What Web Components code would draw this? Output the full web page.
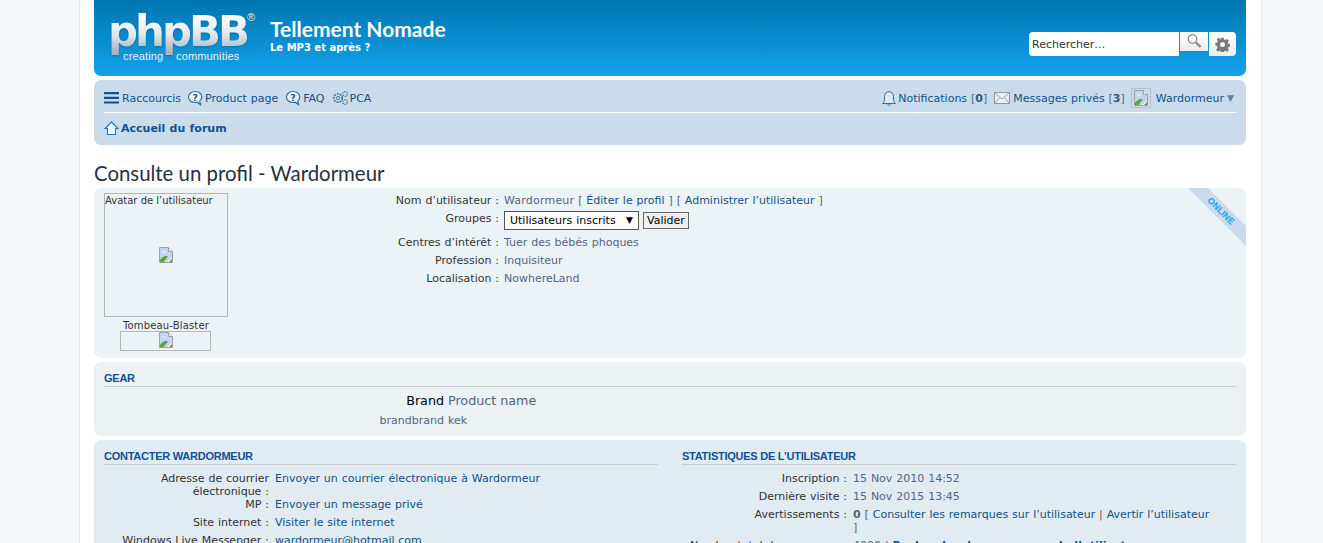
<!DOCTYPE html>
<html lang="fr"><head><meta charset="utf-8"><title>Consulte un profil</title>
<style>
html,body{margin:0;height:543px;overflow:hidden;background:#f5f7fa}
body{font-family:"DejaVu Sans",Verdana,sans-serif;font-size:11px;color:#536482}
</style></head><body>
<phpbb-page>
  <site-header></site-header>
  <nav-bar></nav-bar>
  <page-title>Consulte un profil - Wardormeur</page-title>
  <profile-panel>
    <field-row label="Nom d’utilisateur :" style="--dt:395px"><span style="letter-spacing:.2px">Wardormeur</span> [ <a>Éditer le profil</a> ] [ <a>Administrer l’utilisateur</a> ]</field-row>
    <field-row label="Groupes :" style="--dt:395px;--h:19px"><group-select></group-select></field-row>
    <field-row label="Centres d’intérêt :" style="--dt:395px">Tuer des bébés phoques</field-row>
    <field-row label="Profession :" style="--dt:395px">Inquisiteur</field-row>
    <field-row label="Localisation :" style="--dt:395px">NowhereLand</field-row>
  </profile-panel>
  <gear-panel></gear-panel>
  <two-col-panel>
    <section-block slot="left" title="CONTACTER WARDORMEUR">
      <field-row label="Adresse de courrier électronique :" style="--dt:165px;--gap:6px;--pb:0"><a>Envoyer un courrier électronique à Wardormeur</a></field-row>
      <field-row label="MP :" style="--dt:165px;--gap:6px"><a>Envoyer un message privé</a></field-row>
      <field-row label="Site internet :" style="--dt:165px;--gap:6px"><a>Visiter le site internet</a></field-row>
      <field-row label="Windows Live Messenger :" style="--dt:165px;--gap:6px"><a>wardormeur@hotmail.com</a></field-row>
    </section-block>
    <section-block slot="right" title="STATISTIQUES DE L’UTILISATEUR">
      <field-row label="Inscription :" style="--dt:165px;--gap:6px">15 Nov 2010 14:52</field-row>
      <field-row label="Dernière visite :" style="--dt:165px;--gap:6px">15 Nov 2015 13:45</field-row>
      <field-row label="Avertissements :" style="--dt:165px;--gap:6px;--dd:358px"><b>0</b> [ <a>Consulter les remarques sur l’utilisateur</a> | <a>Avertir l’utilisateur</a> ]</field-row>
      <field-row label="Nombre total de messages :" style="--dt:165px;--gap:6px;--dd:358px">4000 | <a><b>Rechercher les messages de l’utilisateur</b></a></field-row>
    </section-block>
  </two-col-panel>
</phpbb-page>
<script>
const BROKEN=`<svg width="16" height="16" viewBox="0 0 16 16" style="display:block"><path d="M1.5.5H10.5L14.5 4.5V15.5H1.5Z" fill="#fff" stroke="#a0a0a0"/><path d="M10.5.5V4.5H14.5" fill="#eee" stroke="#a0a0a0"/><path d="M2 1H10V5H14V11L9 15H2Z" fill="#c3d5f5"/><path d="M4 5.5c0-1.3 3-1.3 4 0z" fill="#fff"/><path d="M2 15V13C4 10 7 8 10 9.5L5.5 15Z" fill="#5ba532"/><path d="M11 15l3-3v3z" fill="#5ba532"/></svg>`;
function def(name,html,init){customElements.define(name,class extends HTMLElement{constructor(){super();this.attachShadow({mode:"open"}).innerHTML=html}connectedCallback(){init&&init(this)}})}

def("phpbb-page",`<style>
:host{display:block;box-sizing:border-box;width:1183px;margin-left:79px;padding:0 15px 0 14px;background:#fff;border:solid #e6e9ed;border-width:0 1px;height:543px;overflow:hidden}
</style><slot></slot>`);

def("site-header",`<style>
:host{display:flex;height:76px;box-sizing:border-box;padding-left:16px;background:linear-gradient(#0076b1,#12a3eb);border-radius:0 0 7px 7px;color:#fff;align-items:flex-start}
.logo{position:relative;width:160px;height:76px;flex:none}
.pb{position:absolute;left:-2px;top:4px;font:700 42px/56px "DejaVu Sans",sans-serif;letter-spacing:-3px;background:linear-gradient(#fff 22%,#e3e7ea 55%,#aab5bd 85%);-webkit-background-clip:text;background-clip:text;color:transparent;filter:drop-shadow(0 1px 1px rgba(0,60,110,.35))}
.reg{position:absolute;left:137px;top:11px;font:11px/13px "Liberation Sans",sans-serif;color:#dfe9ef}
.t1,.t2{position:absolute;top:49px;font:11px/14px "Liberation Sans",sans-serif;letter-spacing:.15px;color:#e8eff3}
.t1{left:13px}.t2{left:66px}
.site{padding-top:16px;flex:1}
h1{margin:0;font:700 21px/26px "Lato",sans-serif}
p{margin:0;font:700 10px/12px "DejaVu Sans",sans-serif}
.search{display:flex;align-items:flex-start;margin:32px 10px 0 0}
.in{width:150px;height:24px;box-sizing:border-box;background:#fff;border-radius:4px 0 0 4px;color:#333;font:11px/26px "DejaVu Sans",sans-serif;padding-left:3px}
.b{background:linear-gradient(#fff,#ececec);display:flex;justify-content:center}
.b1{width:28px;height:19px;margin-left:1px}
.b2{width:27px;height:24px;margin-left:1px;border-radius:0 4px 4px 0;align-items:center}
</style>
<div class="logo"><span class="pb">phpBB</span><span class="reg">®</span><span class="t1">creating</span><span class="t2">communities</span></div>
<div class="site"><h1>Tellement Nomade</h1><p>Le MP3 et après ?</p></div>
<div class="search"><div class="in">Rechercher…</div>
<div class="b b1"><svg width="16" height="17" viewBox="0 0 16 17"><circle cx="6.500" cy="7" r="4.300" fill="#fafafa" stroke="#777" stroke-width="1.100"/><path d="M10 10.500l4.500 4.500" stroke="#8a8a8a" stroke-width="2.400"/></svg></div>
<div class="b b2"><svg width="15" height="15" viewBox="0 0 24 24"><path fill="#7b7b7b" fill-rule="evenodd" d="M10 1h4l.6 3 2.2.9 2.6-1.7 2.8 2.8-1.7 2.6.9 2.2 3 .6v4l-3 .6-.9 2.2 1.7 2.6-2.8 2.8-2.6-1.7-2.2.9-.6 3h-4l-.6-3-2.2-.9-2.6 1.700-2.8-2.8 1.7-2.6L3.600 14l-3-.6v-4l3-.6.9-2.2L2.800 4l2.800-2.800 2.600 1.700L9.400 4zM12 8a4 4 0 1 0 0 8 4 4 0 0 0 0-8z"/></svg></div></div>`);

const Q=`<svg width="17" height="16" viewBox="0 0 17 16"><path d="M8 1.500C4.300 1.500 1.500 3.800 1.500 7S4.300 12.500 8 12.500c.8 0 1.500-.1 2.200-.3l3.300 2.300-.8-3.400C14 10 14.800 8.600 14.800 7 14.800 3.800 11.800 1.500 8 1.500Z" fill="#eef5fa" stroke="#2f6d9c" stroke-width="1.200"/><text x="8" y="10.500" text-anchor="middle" font-family="DejaVu Sans" font-weight="700" font-size="9" fill="#105289">?</text></svg>`;
def("nav-bar",`<style>
:host{display:block;margin-top:4px;height:65px;box-sizing:border-box;padding:0 10px;background:#cadceb;border-radius:7px;color:#105289;font:11px/13px "DejaVu Sans",sans-serif;word-spacing:.4px}
.r1{display:flex;align-items:center;height:28px;padding-top:4px;border-bottom:1px solid #fff}
.it{display:flex;align-items:center;gap:1px;margin-right:7px;white-space:nowrap}
.sp{flex:1}
.r2{display:flex;align-items:center;height:30px;font-weight:700;gap:2px}
svg{display:block;flex:none}
.av{box-sizing:border-box;width:20px;height:20px;border:1px solid #b9c2ca;display:flex;align-items:center;justify-content:center;margin-right:5px}
.tri{font-size:9px;color:#5a86ab;margin:0 2px 0 3px}
b{color:#2a5a85}
.gr{color:#536482}
</style>
<div class="r1">
<span class="it" style="gap:3px;margin-right:6px"><svg width="15" height="12" viewBox="0 0 15 12"><path d="M0 0h15v2.200H0zM0 4.700h15v2.200H0zM0 9.400h15v2.200H0z" fill="#105289"/></svg>Raccourcis</span>
<span class="it">${Q}Product page</span>
<span class="it">${Q}FAQ</span>
<span class="it"><svg width="17" height="16" viewBox="0 0 17 16" fill="none" stroke="#4d7ea6"><circle cx="6" cy="8" r="4.200" stroke-width="1.800" stroke-dasharray="2 1"/><circle cx="6" cy="8" r="1.600"/><circle cx="13" cy="4" r="2.400" stroke-width="1.300" stroke-dasharray="1.500 .8"/><circle cx="13" cy="12" r="2.400" stroke-width="1.300" stroke-dasharray="1.500 .8"/></svg>PCA</span>
<span class="sp"></span>
<span class="it"><svg width="16" height="16" viewBox="0 0 16 16" fill="#dbe7f1" stroke="#2f6d9c"><path d="M1.500 13.500c1.500-1 2-2.500 2-4.500V6.500C3.500 3.800 5.500 1.700 8 1.700s4.500 2.100 4.500 4.800V9c0 2 .5 3.500 2 4.500Z"/><path d="M6.500 14.500c.5 1 2.500 1 3 0" fill="none"/></svg><span>Notifications <span class="gr">[</span><b>0</b><span class="gr">]</span></span></span>
<span class="it" style="gap:3px;margin-right:6px"><svg width="16" height="12" viewBox="0 0 16 12"><rect x=".5" y=".5" width="15" height="11" fill="#e9eff4" stroke="#8c9aa6"/><path d="M1 1l7 6 7-6M1 11l5-5.500M15 11l-5-5.500" fill="none" stroke="#9aa6b0"/></svg><span>Messages privés <span class="gr">[</span><b>3</b><span class="gr">]</span></span></span>
<span class="av">${BROKEN}</span>
<span>Wardormeur</span><span class="tri">▼</span>
</div>
<div class="r2"><svg width="15" height="15" viewBox="0 0 15 15"><path d="M7.500 1L14 7.500H11.500V13.500H3.500V7.500H1Z" fill="#f4f9fc" stroke="#1b78b4" stroke-width="1.100"/></svg>Accueil du forum</div>`);

def("page-title",`<style>
:host{display:block;margin-top:16px;font:20.4px/24px "Lato",sans-serif;color:#28313f;height:27px}
</style><slot></slot>`);

def("profile-panel",`<style>
:host{display:flex;position:relative;height:170px;box-sizing:border-box;padding:5px 10px;background:#ecf3f7;border-radius:7px;overflow:hidden;color:#536482}
.l{width:124px;flex:none;color:#333;font-size:10px;line-height:12px}
.av{box-sizing:border-box;width:124px;height:124px;border:1px solid #b5b5b5;position:relative;display:flex;align-items:center;justify-content:center}
.av span{position:absolute;left:0;top:1px;font-size:10px;white-space:nowrap}
.n{text-align:center;margin-top:3px;line-height:11px;letter-spacing:.15px}
.rk{box-sizing:border-box;margin:0 0 0 16px;width:91px;height:20px;border:1px solid #b5b5b5;display:flex;justify-content:center}
.d{margin-left:-124px;padding-top:1px;flex:1}
.rib{position:absolute;right:0;top:0;display:block}
.on{position:absolute;right:5px;top:18px;width:40px;text-align:center;transform:rotate(45deg);font:700 9px/10px "Liberation Sans",sans-serif;color:#1da1ee}
</style>
<div class="l"><div class="av"><span>Avatar de l’utilisateur</span>${BROKEN}</div><div class="n">Tombeau-Blaster</div><div class="rk">${BROKEN}</div></div>
<div class="d"><slot></slot></div>
<svg class="rib" width="58" height="58" viewBox="0 0 58 58"><path d="M0 0H20L58 38V58Z" fill="#cadceb"/></svg>
<span class="on">ONLINE</span>`);

def("field-row",`<style>
:host{display:flex;font:11px/13px "DejaVu Sans",sans-serif;word-spacing:.4px;padding-bottom:var(--pb,5px);min-height:var(--h,13px)}
.dt{width:var(--dt,340px);flex:none;text-align:right;color:#333}
.dd{margin-left:var(--gap,5px);max-width:var(--dd,none);flex:1;min-width:0;color:#536482}
::slotted(a){color:#105289}
</style><div class="dt"></div><div class="dd"><slot></slot></div>`,el=>{el.shadowRoot.querySelector(".dt").textContent=el.getAttribute("label")});

def("group-select",`<style>
:host{display:flex;align-items:center;gap:4px;margin-top:-1px;color:#000}
.s{box-sizing:border-box;width:135px;height:19px;border:1px solid #555;background:#fff;display:flex;align-items:center;justify-content:space-between;padding:0 5px;font:11px/15px "DejaVu Sans",sans-serif}
.s i{font-style:normal;font-size:9px}
.v{box-sizing:border-box;width:46px;height:17px;border:1px solid #666;background:#efefef;text-align:center;font:11px/15px "DejaVu Sans",sans-serif}
</style><div class="s">Utilisateurs inscrits<i>▼</i></div><div class="v">Valider</div>`);

def("gear-panel",`<style>
:host{display:block;margin-top:4px;height:74px;box-sizing:border-box;padding:9px 10px 0;background:#ecf1f3;border-radius:7px}
h3{margin:0 0 6px;font:700 11px/14px "Liberation Sans",sans-serif;letter-spacing:-.25px;color:#115098;border-bottom:1px solid #ccc;padding-bottom:1px}
.r{display:flex;align-items:baseline}
.a{width:339px;text-align:right;flex:none;color:#000}.b{margin-left:5px}
.big .a{width:340px}.big .b{margin-left:4px}
.big{font:12.7px/16px "DejaVu Sans",sans-serif;margin-bottom:4px}
.sm{font:11px/16px "DejaVu Sans",sans-serif}
.sm .a{color:#536482;width:340px}.sm .b{margin-left:4px}
</style><h3>GEAR</h3><div class="r big"><div class="a">Brand</div><div class="b">Product name</div></div><div class="r sm"><div class="a">brandbrand</div><div class="b">kek</div></div>`);

def("two-col-panel",`<style>
:host{display:flex;gap:24px;margin-top:4px;height:120px;box-sizing:border-box;padding:9px 10px 0;background:#e1ebf2;border-radius:7px}
::slotted(*){flex:1 1 0;min-width:0}
</style><slot name="left"></slot><slot name="right"></slot>`);

def("section-block",`<style>
:host{display:block}
h3{margin:0 0 7px;font:700 11px/14px "Liberation Sans",sans-serif;letter-spacing:-.25px;color:#115098;border-bottom:1px solid #ccc;padding-bottom:1px}
</style><h3></h3><slot></slot>`,el=>{el.shadowRoot.querySelector("h3").textContent=el.getAttribute("title");el.removeAttribute("title")});
</script>
</body></html>
